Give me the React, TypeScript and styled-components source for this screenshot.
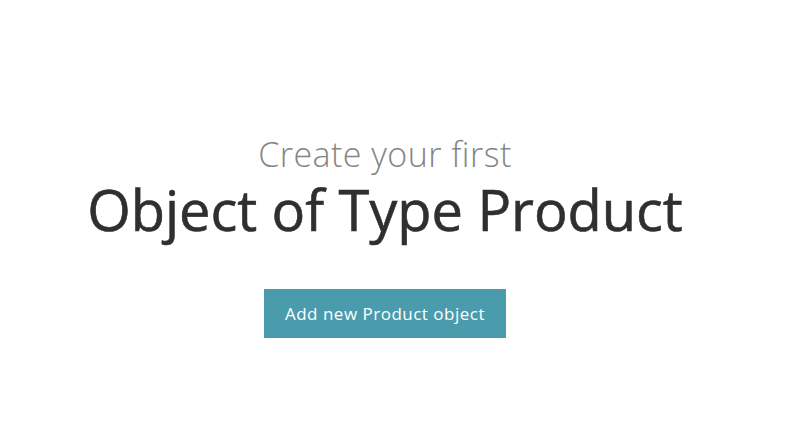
import React from "react";
import styled, { createGlobalStyle } from "styled-components";

const Global = createGlobalStyle`
  html, body { margin: 0; padding: 0; background: #ffffff; }
  body { font-family: "Open Sans", "Noto Sans", sans-serif; }
`;

const Page = styled.main`
  width: 770px;
  height: 448px;
  display: flex;
  flex-direction: column;
  align-items: center;
  box-sizing: border-box;
  padding-top: 132px;
`;

const Subtitle = styled.h2`
  margin: 0;
  font-size: 34px;
  font-weight: 300;
  line-height: 44px;
  color: #858585;
  letter-spacing: 0.45px;
`;

const Title = styled.h1`
  margin: 0;
  font-size: 56px;
  font-weight: 400;
  line-height: 66px;
  color: #2f2f2f;
  letter-spacing: -0.05px;
  -webkit-text-stroke: 0.6px #2f2f2f;
`;

const Button = styled.button`
  margin-top: 47px;
  width: 242px;
  height: 49px;
  border: none;
  background: #4a9bac;
  color: #ffffff;
  font-family: inherit;
  font-size: 17px;
  font-weight: 400;
  letter-spacing: 0.5px;
  cursor: pointer;
`;

export default function App() {
  return (
    <>
      <Global />
      <Page>
        <Subtitle>Create your first</Subtitle>
        <Title>Object of Type Product</Title>
        <Button>Add new Product object</Button>
      </Page>
    </>
  );
}
